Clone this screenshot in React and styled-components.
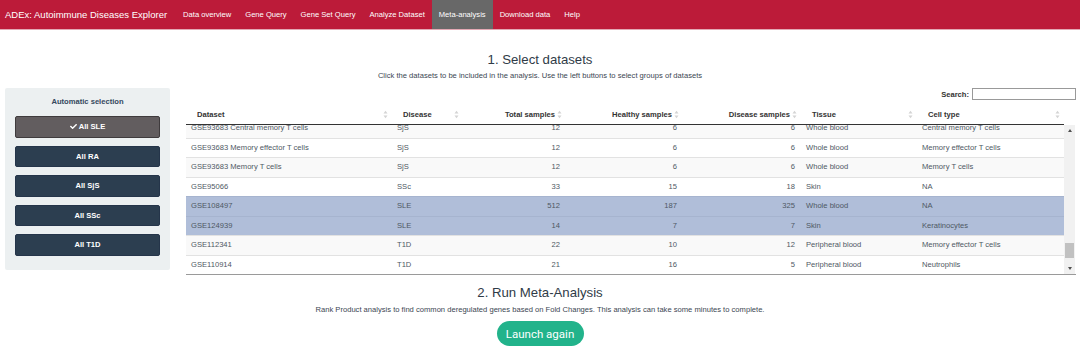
import React, { useLayoutEffect, useRef } from 'react';
import styled, { createGlobalStyle } from 'styled-components';
import { FaCheck } from 'react-icons/fa';

const GlobalStyle = createGlobalStyle`
  html, body {
    margin: 0;
    overflow: hidden;
  }
  body {
    background: #fff;
    font-family: "Liberation Sans", Arial, sans-serif;
    color: #2c3e50;
  }
`;

const navItems = ['Data overview', 'Gene Query', 'Gene Set Query', 'Analyze Dataset', 'Meta-analysis', 'Download data', 'Help'];
const groups = ['SLE', 'RA', 'SjS', 'SSc', 'T1D'];

const columns = [
    { label: 'Dataset', width: 206 },
    { label: 'Disease', width: 71 },
    { label: 'Total samples', width: 103, num: true },
    { label: 'Healthy samples', width: 117, num: true },
    { label: 'Disease samples', width: 118, num: true },
    { label: 'Tissue', width: 116 },
    { label: 'Cell type', width: 147 },
];
const gridCols = columns.map((c) => c.width + 'px').join(' ');

const rows = [
    ['GSE93683 Central memory T cells', 'SjS', 12, 6, 6, 'Whole blood', 'Central memory T cells'],
    ['GSE93683 Memory effector T cells', 'SjS', 12, 6, 6, 'Whole blood', 'Memory effector T cells'],
    ['GSE93683 Memory T cells', 'SjS', 12, 6, 6, 'Whole blood', 'Memory T cells'],
    ['GSE95066', 'SSc', 33, 15, 18, 'Skin', 'NA'],
    ['GSE108497', 'SLE', 512, 187, 325, 'Whole blood', 'NA', true],
    ['GSE124939', 'SLE', 14, 7, 7, 'Skin', 'Keratinocytes', true],
    ['GSE112341', 'T1D', 22, 10, 12, 'Peripheral blood', 'Memory effector T cells'],
    ['GSE110914', 'T1D', 21, 16, 5, 'Peripheral blood', 'Neutrophils'],
];

const SortIcon = () => (
    <svg width="5" height="9" viewBox="0 0 5 9">
        <polygon points="0.5,3.5 2.5,0.8 4.5,3.5" fill="#d4d4d4" />
        <polygon points="0.5,5.5 2.5,8.2 4.5,5.5" fill="#d4d4d4" />
    </svg>
);

const App = () => {
    const scrollRef = useRef(null);

    useLayoutEffect(() => {
        // table is scrolled a little past the top of the first visible row
        if (scrollRef.current) scrollRef.current.scrollTop = 7;
    }, []);

    return (
        <>
            <GlobalStyle />
            <Navbar>
                <Brand>ADEx: Autoimmune Diseases Explorer</Brand>
                {navItems.map((item) => (
                    <NavLink key={item} active={item === 'Meta-analysis'}>{item}</NavLink>
                ))}
            </Navbar>

            <Heading top={22}>1. Select datasets</Heading>
            <SubText top={3}>Click the datasets to be included in the analysis. Use the left buttons to select groups of datasets</SubText>

            <Content>
                <Well>
                    <WellTitle>Automatic selection</WellTitle>
                    <ButtonStack>
                        {groups.map((g) => (
                            <GroupButton key={g} active={g === 'SLE'}>
                                {g === 'SLE' && <FaCheck size={7} />}
                                All {g}
                            </GroupButton>
                        ))}
                    </ButtonStack>
                </Well>

                <TableArea>
                    <SearchRow>
                        <SearchLabel>Search:</SearchLabel>
                        <SearchInput type="text" />
                    </SearchRow>
                    <HeadRow>
                        {columns.map((c) => (
                            <HeadCell key={c.label} num={c.num}>
                                <span>{c.label}</span>
                                <SortIcon />
                            </HeadCell>
                        ))}
                    </HeadRow>
                    <BodyWrap>
                        <RowsViewport ref={scrollRef}>
                            {rows.map((r, i) => (
                                <Row key={r[0]} striped={i % 2 === 0} selected={r[7]}>
                                    {columns.map((c, j) => (
                                        <Cell key={c.label} num={c.num}>{r[j]}</Cell>
                                    ))}
                                </Row>
                            ))}
                        </RowsViewport>
                        <Rail>
                            <RailButton><ArrowUp /></RailButton>
                            <Track>
                                <Thumb />
                            </Track>
                            <RailButton><ArrowDown /></RailButton>
                        </Rail>
                    </BodyWrap>
                </TableArea>
            </Content>

            <Heading top={10}>2. Run Meta-Analysis</Heading>
            <SubText top={4}>Rank Product analysis to find common deregulated genes based on Fold Changes. This analysis can take some minutes to complete.</SubText>
            <LaunchRow>
                <LaunchButton>Launch again</LaunchButton>
            </LaunchRow>
        </>
    );
};

const Navbar = styled.nav`
    display: flex;
    align-items: stretch;
    height: 29px;
    background: #bc1b39;
    border-bottom: 1px solid #e3a9b4;
`

const Brand = styled.div`
    display: flex;
    align-items: center;
    padding: 0 9px 0 5px;
    color: #fff;
    font-size: 9.5px;
`

const NavLink = styled.a`
    display: flex;
    align-items: center;
    padding: 0 7px;
    color: #fff;
    font-size: 7.6px;
    background: ${(p) => (p.active ? '#686868' : 'transparent')};
`

const Heading = styled.h3`
    margin: ${(p) => p.top}px 0 0;
    text-align: center;
    font-size: 13.2px;
    line-height: 16px;
    font-weight: 400;
    color: #2f3b47;
`

const SubText = styled.p`
    margin: ${(p) => p.top}px 0 0;
    text-align: center;
    font-size: 7.6px;
    line-height: 10px;
    color: #3b4652;
`

const Content = styled.div`
    display: flex;
    gap: 16px;
    padding: 0 4px 0 5px;
    margin-top: 7px;
`

const Well = styled.div`
    box-sizing: border-box;
    width: 165px;
    height: 182px;
    padding: 9px 10px 0;
    background: #ecf0f1;
    border-radius: 2px;
`

const WellTitle = styled.div`
    text-align: center;
    font-weight: bold;
    font-size: 7.6px;
    line-height: 10px;
    color: #34495e;
    margin-bottom: 9px;
`

const ButtonStack = styled.div`
    display: flex;
    flex-direction: column;
    gap: 8px;
`

const GroupButton = styled.button`
    display: flex;
    align-items: center;
    justify-content: center;
    gap: 2px;
    height: 21.5px;
    padding: 0;
    border-radius: 2px;
    border: 1px solid ${(p) => (p.active ? '#3f3b3d' : '#25354a')};
    background: ${(p) => (p.active ? '#625d5f' : '#2c3e50')};
    color: #fff;
    font-family: "Liberation Sans", Arial, sans-serif;
    font-weight: bold;
    font-size: 7.6px;
`

const TableArea = styled.div`
    flex: 1;
    display: flex;
    flex-direction: column;
`

const SearchRow = styled.div`
    display: flex;
    justify-content: flex-end;
    align-items: center;
    height: 12px;
    margin-bottom: 4px;
`

const SearchLabel = styled.label`
    font-weight: bold;
    font-size: 7.6px;
    color: #333;
    margin-right: 3px;
`

const SearchInput = styled.input`
    box-sizing: border-box;
    width: 104px;
    height: 12px;
    padding: 0;
    border: 1px solid #999;
`

const HeadRow = styled.div`
    display: grid;
    grid-template-columns: ${gridCols};
    height: 20px;
    border-bottom: 1px solid #333;
    width: 878px;
`

const HeadCell = styled.div`
    display: flex;
    align-items: center;
    justify-content: ${(p) => (p.num ? 'flex-end' : 'space-between')};
    gap: 2px;
    padding: 0 4px 0 11px;
    font-weight: bold;
    font-size: 7.6px;
    color: #333;
    white-space: nowrap;
`

const BodyWrap = styled.div`
    display: flex;
    border-bottom: 1px solid #9a9a9a;
`

const RowsViewport = styled.div`
    width: 878px;
    height: 149px;
    overflow: hidden;
`

const Row = styled.div`
    display: grid;
    grid-template-columns: ${gridCols};
    box-sizing: border-box;
    height: 19.5px;
    border-top: 1px solid ${(p) => (p.selected ? '#a6b4cf' : '#e2e2e2')};
    background: ${(p) => (p.selected ? '#b0bed9' : p.striped ? '#f9f9f9' : '#fff')};
`

const Cell = styled.div`
    padding: 0 6px 0 5px;
    font-size: 7.6px;
    line-height: 18.5px;
    color: #4e5863;
    text-align: ${(p) => (p.num ? 'right' : 'left')};
    white-space: nowrap;
    overflow: hidden;
`

const Rail = styled.div`
    width: 11px;
    display: flex;
    flex-direction: column;
    background: #f1f1f1;
`

const RailButton = styled.div`
    height: 11px;
    display: flex;
    align-items: center;
    justify-content: center;
`

const ArrowUp = styled.span`
    width: 0;
    height: 0;
    border-left: 2.5px solid transparent;
    border-right: 2.5px solid transparent;
    border-bottom: 3px solid #505050;
`

const ArrowDown = styled.span`
    width: 0;
    height: 0;
    border-left: 2.5px solid transparent;
    border-right: 2.5px solid transparent;
    border-top: 3px solid #505050;
`

const Track = styled.div`
    flex: 1;
    display: flex;
    flex-direction: column;
    align-items: center;
`

const Thumb = styled.div`
    margin-top: 107px;
    width: 9px;
    height: 15px;
    background: #c1c1c1;
`

const LaunchRow = styled.div`
    display: flex;
    justify-content: center;
    margin-top: 6px;
`

const LaunchButton = styled.button`
    width: 87px;
    height: 25px;
    padding: 0;
    border: none;
    border-radius: 13px;
    background: #22b38b;
    color: #fff;
    font-family: Roboto, "Liberation Sans", sans-serif;
    font-size: 11.5px;
`

export default App;
